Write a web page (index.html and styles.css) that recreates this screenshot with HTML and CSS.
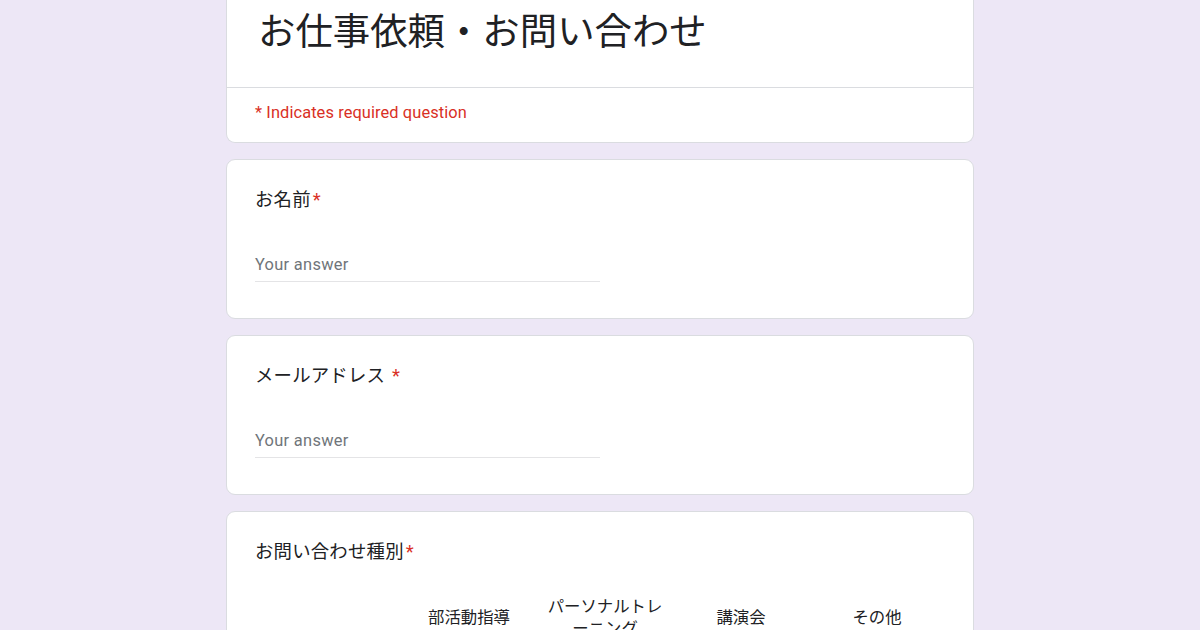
FILE: index.html
```html
<!DOCTYPE html>
<html lang="ja">
<head>
<meta charset="utf-8">
<title>お仕事依頼・お問い合わせ</title>
<link rel="stylesheet" href="styles.css">
</head>
<body>
<main class="form">
  <section class="card header-card">
    <h1 class="form-title">お仕事依頼・お問い合わせ</h1>
    <div class="required-note">* Indicates required question</div>
  </section>

  <section class="card question">
    <div class="q-title">お名前<span class="req">*</span></div>
    <div class="answer"><span class="placeholder">Your answer</span></div>
  </section>

  <section class="card question">
    <div class="q-title">メールアドレス <span class="req">*</span></div>
    <div class="answer"><span class="placeholder">Your answer</span></div>
  </section>

  <section class="card question">
    <div class="q-title">お問い合わせ種別<span class="req">*</span></div>
    <div class="grid">
      <div class="grid-label"></div>
      <div class="grid-col">部活動指導</div>
      <div class="grid-col">パーソナルトレーニング</div>
      <div class="grid-col">講演会</div>
      <div class="grid-col">その他</div>
    </div>
  </section>
</main>
</body>
</html>
```

FILE: styles.css
```css
html, body {
  margin: 0;
  padding: 0;
}

body {
  background: #ede7f6;
  width: 1200px;
  height: 630px;
  overflow: hidden;
  font-family: Roboto, "Noto Sans CJK JP", sans-serif;
  color: #202124;
}

.form {
  width: 748px;
  margin: 0 auto;
  display: flex;
  flex-direction: column;
  gap: 16px;
}

.card {
  background: #fff;
  border: 1px solid #dadce0;
  border-radius: 9px;
  box-sizing: border-box;
}

.header-card {
  border-top: none;
  border-top-left-radius: 0;
  border-top-right-radius: 0;
}

.form-title {
  margin: 0;
  padding: 6px 28px 34px 31px;
  font-family: "Noto Sans CJK JP", sans-serif;
  font-weight: 400;
  font-size: 37.4px;
  line-height: 47px;
  color: #202124;
  border-bottom: 1px solid #dadce0;
}

.required-note {
  padding: 14px 28px 18px 28px;
  font-size: 16.4px;
  line-height: 22px;
  color: #d93025;
  letter-spacing: 0.1px;
}

.question {
  padding: 26px 28px 36px 28px;
}

.q-title {
  font-family: Roboto, "Noto Sans CJK JP", sans-serif;
  font-size: 18.4px;
  line-height: 28px;
  letter-spacing: 0.2px;
  color: #202124;
}

.req {
  color: #d93025;
  margin-left: 2px;
}

.answer {
  width: 345px;
  margin-top: 37px;
  padding-bottom: 2px;
  border-bottom: 1px solid #e4e4e6;
  font-size: 16.4px;
  line-height: 28px;
}

.placeholder {
  color: #70757a;
  letter-spacing: 0.3px;
}

.grid {
  margin-top: 30px;
  display: grid;
  grid-template-columns: 146px repeat(4, 136px);
  align-items: center;
}

.grid-col {
  padding: 0 8px;
  text-align: center;
  font-size: 16.4px;
  line-height: 22px;
  color: #202124;
}
```
